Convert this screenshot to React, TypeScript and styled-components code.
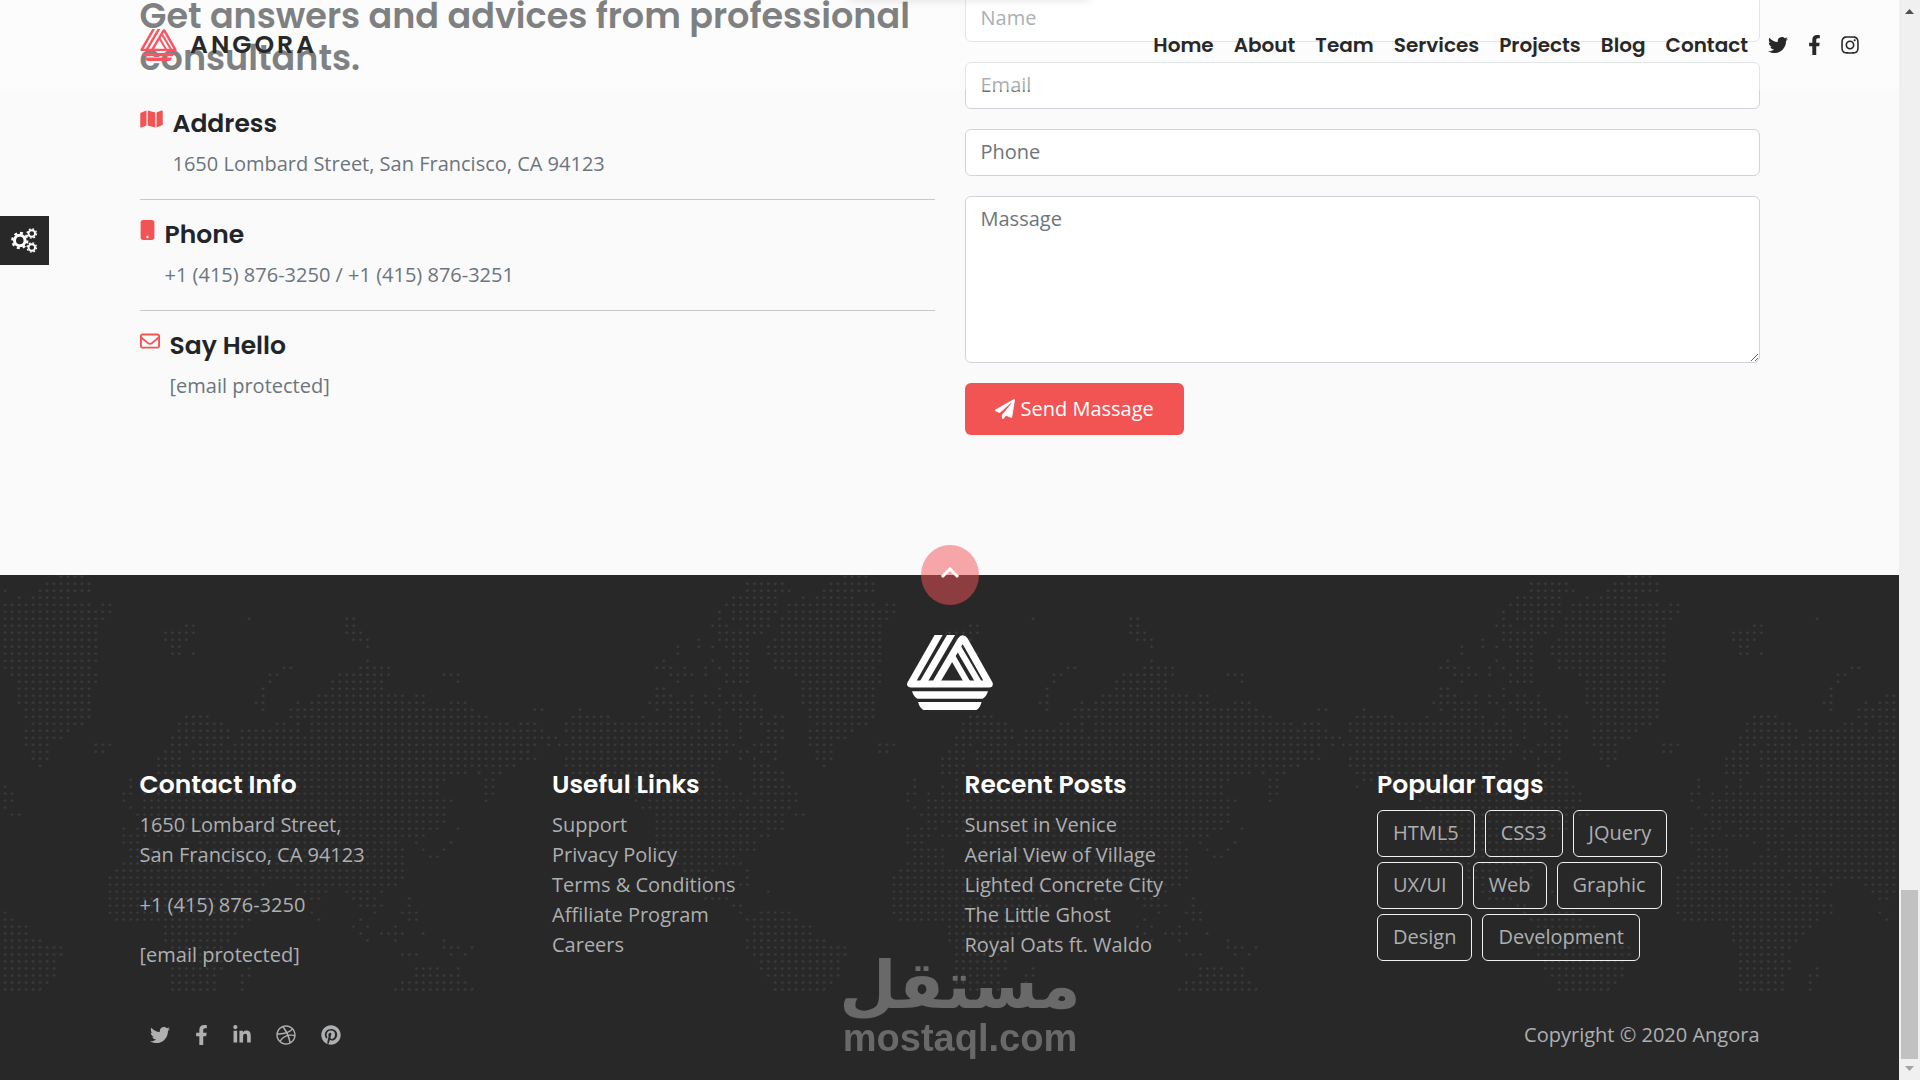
import React from "react";
import styled, { createGlobalStyle } from "styled-components";
import {
  FaDribbble,
  FaFacebookF,
  FaInstagram,
  FaLinkedinIn,
  FaPaperPlane,
  FaPinterest,
  FaTwitter,
} from "react-icons/fa";
import { FaMap, FaMobileButton, FaRegEnvelope } from "react-icons/fa6";

const red = "#f25454";
const dark = "#282828";
const ink = "#212529";
const muted = "#6c757d";
const footerText = "#adafb1";
const display = `Poppins, Inter, "Open Sans", sans-serif`;
const body = `"Open Sans", "Noto Sans", sans-serif`;

const GlobalStyle = createGlobalStyle`
  *, *::before, *::after { box-sizing: border-box; }
  html, body { height: 100%; overflow: hidden; }
  body { margin: 0; background: #fafafa; color: ${ink}; font: 400 20px/30px ${body}; }
  a { color: inherit; text-decoration: none; }
  h2, h3, p, ul { margin: 0; padding: 0; }
  ul { list-style: none; }
  button, input, textarea { font: inherit; }
`;

const Shell = styled.div`
  display: flex;
  height: 100vh;
  overflow: hidden;
`;

const Page = styled.div`
  position: relative;
  flex: 1;
  min-width: 0;
`;

const Container = styled.div`
  max-width: 1650px;
  margin: 0 auto;
  padding: 0 15px;
`;

const Icon = styled.span<{ $width: number }>`
  display: flex;
  flex: none;
  width: ${(p) => p.$width}px;
  height: 20px;
  svg { width: 100%; height: 100%; }
`;

/* ---------- header ---------- */

const Header = styled.header`
  position: absolute;
  z-index: 5;
  top: 0;
  left: 0;
  right: 0;
  height: 90px;
  display: flex;
  align-items: center;
  justify-content: space-between;
  padding: 0 40px 0 140px;
  background: rgba(255, 255, 255, 0.42);
`;

const Brand = styled.a`
  display: flex;
  align-items: center;
  gap: 13px;
  color: ${dark};
  font: 600 25px/32px ${display};
  letter-spacing: 3px;
`;

const Nav = styled.nav`
  display: flex;
  align-items: center;
  gap: 20px;
  color: ${dark};
  font: 600 20px/30px ${display};
`;

/* ---------- contact ---------- */

const Contact = styled.main`
  margin-top: -5px;
  padding-bottom: 140px;
`;

const TwoColumns = styled.div`
  display: grid;
  grid-template-columns: 1fr 1fr;
  gap: 30px;
`;

const Lead = styled.h2`
  margin-bottom: 30px;
  font: 600 35px/42px ${display};
`;

const InfoItem = styled.section`
  display: flex;
  align-items: flex-start;
  gap: 10px;
  padding-bottom: 20px;

  & + & {
    padding-top: 20px;
    border-top: 1px solid #c8c9ca;
  }

  > ${Icon} { color: ${red}; }
  h3 { margin-bottom: 10px; font: 600 25px/30px ${display}; }
  p { color: ${muted}; }
`;

const Form = styled.form`
  display: flex;
  flex-direction: column;
  align-items: flex-start;
  gap: 20px;
`;

const Field = styled.input`
  display: block;
  width: 100%;
  height: 47px;
  padding: 6px 15px 8px;
  border: 1px solid #ced4da;
  border-radius: 6px;
  background: #fff;
  color: #495057;
  &::placeholder { color: ${muted}; opacity: 1; }
`;

const MessageField = styled(Field)`
  height: 167px;
  padding: 7px 15px;
  resize: vertical;
`;

const SendButton = styled.button`
  display: flex;
  align-items: center;
  gap: 6px;
  height: 52px;
  padding: 0 30px;
  border: 0;
  border-radius: 6px;
  background: ${red};
  color: #fff;
`;

/* ---------- footer ---------- */

const Footer = styled.footer`
  position: relative;
  padding: 60px 0 30px;
  background: ${dark};
  color: ${footerText};
`;

const MapBackdrop = styled.svg`
  position: absolute;
  top: 0;
  left: 0;
  width: 100%;
  height: 420px;
`;

const FooterBody = styled(Container)`
  position: relative;
`;

const FooterLogo = styled.div`
  display: flex;
  justify-content: center;
  margin-bottom: 60px;
  color: #fff;
`;

const FooterColumns = styled.div`
  display: grid;
  grid-template-columns: repeat(4, 1fr);
  gap: 30px;
  margin-bottom: 30px;

  h3 { margin-bottom: 10px; color: #fff; font: 600 25px/30px ${display}; }
  p { margin-bottom: 20px; }
`;

const Tags = styled.ul`
  display: flex;
  flex-wrap: wrap;
  gap: 5px 10px;
  max-width: 320px;
`;

const Tag = styled.a`
  display: block;
  padding: 7px 15px 8px;
  border: 1px solid #f0f1f2;
  border-radius: 6px;
`;

const FooterBottom = styled.div`
  display: flex;
  align-items: center;
  justify-content: space-between;
`;

const Social = styled.div`
  display: flex;
  gap: 25px;
  padding-left: 10px;
`;

const ToTop = styled.a`
  position: absolute;
  z-index: 2;
  top: -30px;
  left: 50%;
  display: flex;
  align-items: center;
  justify-content: center;
  width: 58px;
  height: 60px;
  padding-bottom: 4px;
  margin-left: -29px;
  border-radius: 50%;
  background: rgba(242, 80, 86, 0.5);
`;

/* ---------- floating pieces ---------- */

const SettingsButton = styled.button`
  position: fixed;
  z-index: 6;
  top: 216px;
  left: 0;
  display: flex;
  align-items: center;
  justify-content: center;
  width: 49px;
  height: 49px;
  padding: 0;
  border: 0;
  background: ${dark};
  color: #fff;
`;

const TopShadow = styled.div`
  position: fixed;
  z-index: 7;
  top: -10px;
  left: 50%;
  width: 240px;
  height: 8px;
  margin-left: -110px;
  box-shadow: 0 2px 10px rgba(0, 0, 0, 0.12);
`;

const Watermark = styled.div`
  position: fixed;
  z-index: 8;
  left: 50%;
  bottom: 20px;
  display: flex;
  flex-direction: column;
  align-items: center;
  transform: translateX(-50%);
  color: #696969;
  pointer-events: none;
`;

const WatermarkArabic = styled.span`
  font: 700 66px/60px "DejaVu Sans", sans-serif;
`;

const WatermarkLatin = styled.span`
  font: 700 38px/44px "Liberation Sans", sans-serif;
`;

const Scrollbar = styled.div`
  display: flex;
  flex-direction: column;
  align-items: center;
  justify-content: space-between;
  width: 21px;
  height: 100vh;
  padding: 7px 0;
  background: #f0f0f0;
`;

const Track = styled.div`
  display: flex;
  flex: 1;
  flex-direction: column;
  justify-content: flex-end;
  padding-bottom: 5px;
`;

const Thumb = styled.div`
  width: 17px;
  height: 169px;
  background: #c1c1c1;
`;

/* ---------- dotted world map ---------- */

// Each row holds three neighbouring panels of the map (columns from 0, 33 and 89);
// every panel lists its runs of dots as "first-last".
const MAP_ROWS = [
  "|8-11|",
  "27-32|6-12|",
  "27-32|0,5-12|",
  "25-31|2,4-9|",
  "24-31|0-12,14-15|",
  "23,25-31|0-15|",
  "23,25-30,32|0-14,35,49-50|",
  "22-24,27-30,32|0-13,26-27,49-50|",
  "23-29,32|0-13,23-27,49-51|",
  "20,23-27,31-32|0-13,23-26,50-52|",
  "17,20,22,24-27,30-32|0-13,24-25,52|",
  "17,25-27,30-32|0-13,24-25,27|",
  "15,22,25-27,31-32|0-13,52|",
  "14-16,18,21,23,25-27,31-32|0-12,40-41,51-55|",
  "16-19,21,24,26-27|1-13,38-39,48-55|7-9",
  "17,24-27|2-13,38,47-54|9",
  "14-15,23|2-12,37,47-54|",
  "14-16,19,21,23,25-26,28|2-12,37,45-55|0-1,3-4",
  "13-19,21-22,24-28|2-12,36-37,42,44-55|0-4,8-10",
  "3,14,16-19,23,25-29|3-12,37,41-55|0-11,20-21",
  "2-7,12,16-20,23,26-29,31-32|3-12,26-29,41-55|0-13",
  "1-20,22-23,26,29-31|4-11,25-31,39-40,42,44-55|0-16,18-20",
  "1-18,20-24,26,30-32|3-9,25-32,34-42,44-55|0-21",
  "2-24,26,30-32|3-8,24-32,34-55|0-23",
  "0-25,28-31|3-6,13-15,24-26,28-31,33-55|0-20,22",
  "2-24,26-27,29-31|4-6,13-14,23-25,27-55|0-19",
  "1-23,26,28,31|4-6,22-25,27-55|0-20",
  "1-22,28-30|5,22-25,27-55|0-17",
  "2-22,28-32|22-25,28-55|0-10,12,14-15",
  "3-4,6-23,28-32|18,24,28-55|0-7,13-14",
  "2,6-24,28-32|0,18,22,24,27-55|0-6,13-14",
  "10-26,28-32|0-1,17-18,20,22-55|0-6,13-14",
  "11,13-27,29-32|0-1,17,20-55|0-8,13",
  "12-25,27-32|0,18,20-55|0-7",
  "14-24,26-32|1-2,19-55|0-7",
  "14-32|20-55|0-7",
  "14-28,30-32|17,19-21,24-30,33-55|0-6,9",
  "14-27,29-30|17-20,22-25,28-30,32-55|0-4",
  "14-28|17-19,26,28-55|0,3,8",
  "14-28|18-22,28,30-55|0-1,4,7",
  "16-25|18-22,27-29,31-55|0-1,5-6",
  "17-26|17-22,26-29,31-55|0-1",
  "18-22,27|16-34,36-55|0-1",
  "18-21,27|15-30,32-35,37-55|0-1",
  "20,26-27|15-31,33-37,42-55|0",
  "20-21,30|15-31,33-36,43-46,49-52,54|",
  "21-24|15-35,44-45,50-53|2",
  "25-26|15-37,51-54|2",
  "26,29-32|0,15-37,44,53|1-3",
  "27-32|0-1,16-35,45,51|2-3",
  "28-32|0-3,23-34,50,52|0",
  "28-32|0-3,23-33,51,54-55|0-1,4",
  "27-32|0-5,23-32,52|0,7",
  "27-32|0-8,24-31|7-9,11",
  "28-32|0-8,24-30|1-3,8,10",
  "29-32|0-7,24-31|",
  "29-32|0-7,24-31,35|3-6,9",
  "30-32|0-7,24-30,34-35|3-9",
  "31-32|0-6,24-30,34|1-10",
  "31-32|0-5,24-30,34|0-11",
];

const PANEL_START = [0, 33, 89];

const mapPath = MAP_ROWS.map((row, r) =>
  row
    .split("|")
    .map((panel, p) =>
      panel
        .split(",")
        .filter(Boolean)
        .map((run) => {
          const [from, to = from] = run.split("-").map(Number);
          let d = "";
          for (let c = from; c <= to; c++) {
            const x = 1.8 + (PANEL_START[p] + c) * 6.968;
            d += `M${x.toFixed(1)} ${(1.8 + r * 6.995).toFixed(1)}h.01`;
          }
          return d;
        })
        .join("")
    )
    .join("")
).join("");

const WorldMap = () => (
  <MapBackdrop aria-hidden="true">
    <defs>
      <pattern
        id="world"
        x="50%"
        y="0"
        width="784"
        height="420"
        patternUnits="userSpaceOnUse"
        patternTransform="translate(-392 0)"
      >
        <path d={mapPath} fill="none" stroke="#3d3d3d" strokeWidth="2.4" strokeLinecap="round" />
      </pattern>
    </defs>
    <rect width="100%" height="420" fill="url(#world)" />
  </MapBackdrop>
);

type MarkProps = { width: number; height: number; color: string; line: number };

const Mark = ({ width, height, color, line }: MarkProps) => (
  <svg width={width} height={height} viewBox="0 0 256 225" preserveAspectRatio="none" aria-hidden="true">
    <g fill="none" stroke={color} strokeWidth={line} strokeLinejoin="round">
      <path d="M97 -5L11 147H245L171 15Q166 7 161 15L85 145" />
      <path d="M134 -5L47 145" />
      <path d="M154 40L215 145M136 66L181 145" strokeWidth={line - 3} />
    </g>
    <path d="M15 169H241Q236 186 225 191H31Q20 186 15 169Z" fill={color} />
    <path d="M33 201H222Q217 220 207 225H49Q38 220 33 201Z" fill={color} />
  </svg>
);

const Gear = ({ x, y, r }: { x: number; y: number; r: number }) => {
  const teeth = r * 0.9;
  return (
    <g fill="none" stroke="currentColor">
      <circle cx={x} cy={y} r={r * 0.63} strokeWidth={r * 0.36} />
      <circle
        cx={x}
        cy={y}
        r={teeth}
        strokeWidth={r * 0.26}
        strokeDasharray={(Math.PI * teeth) / 8}
      />
    </g>
  );
};

const NAV = ["Home", "About", "Team", "Services", "Projects", "Blog", "Contact"];
const LINKS = ["Support", "Privacy Policy", "Terms & Conditions", "Affiliate Program", "Careers"];
const POSTS = [
  "Sunset in Venice",
  "Aerial View of Village",
  "Lighted Concrete City",
  "The Little Ghost",
  "Royal Oats ft. Waldo",
];
const TAGS = ["HTML5", "CSS3", "JQuery", "UX/UI", "Web", "Graphic", "Design", "Development"];

const LinkList = ({ items }: { items: string[] }) => (
  <ul>
    {items.map((item) => (
      <li key={item}>
        <a href="#">{item}</a>
      </li>
    ))}
  </ul>
);

export default function App() {
  return (
    <Shell>
      <GlobalStyle />
      <Page>
        <Header>
          <Brand href="#">
            <Mark width={37} height={32} color="#fb5460" line={17} />
            ANGORA
          </Brand>
          <Nav>
            {NAV.map((item) => (
              <a href="#" key={item}>{item}</a>
            ))}
            <a href="#" aria-label="Twitter"><Icon $width={20}><FaTwitter /></Icon></a>
            <a href="#" aria-label="Facebook"><Icon $width={13}><FaFacebookF /></Icon></a>
            <a href="#" aria-label="Instagram"><Icon $width={18}><FaInstagram /></Icon></a>
          </Nav>
        </Header>

        <Contact>
          <Container>
            <TwoColumns>
              <div>
                <Lead>Get answers and advices from professional consultants.</Lead>
                <InfoItem>
                  <Icon $width={23}><FaMap /></Icon>
                  <div>
                    <h3>Address</h3>
                    <p>1650 Lombard Street, San Francisco, CA 94123</p>
                  </div>
                </InfoItem>
                <InfoItem>
                  <Icon $width={15}><FaMobileButton /></Icon>
                  <div>
                    <h3>Phone</h3>
                    <p>+1 (415) 876-3250 / +1 (415) 876-3251</p>
                  </div>
                </InfoItem>
                <InfoItem>
                  <Icon $width={20}><FaRegEnvelope /></Icon>
                  <div>
                    <h3>Say Hello</h3>
                    <p>[email protected]</p>
                  </div>
                </InfoItem>
              </div>
              <Form onSubmit={(e: React.FormEvent) => e.preventDefault()}>
                <Field type="text" placeholder="Name" aria-label="Name" />
                <Field type="email" placeholder="Email" aria-label="Email" />
                <Field type="tel" placeholder="Phone" aria-label="Phone" />
                <MessageField as="textarea" placeholder="Massage" aria-label="Massage" />
                <SendButton type="submit">
                  <Icon $width={20}><FaPaperPlane /></Icon>
                  Send Massage
                </SendButton>
              </Form>
            </TwoColumns>
          </Container>
        </Contact>

        <Footer>
          <WorldMap />
          <ToTop href="#" aria-label="Back to top">
            <svg width="20" height="12" viewBox="0 0 20 12" aria-hidden="true">
              <path d="M2 10L10 2L18 10" fill="none" stroke="#fff" strokeWidth="3" />
            </svg>
          </ToTop>
          <FooterBody>
            <FooterLogo>
              <Mark width={86} height={75} color="#fff" line={21} />
            </FooterLogo>
            <FooterColumns>
              <section>
                <h3>Contact Info</h3>
                <p>
                  1650 Lombard Street,
                  <br />
                  San Francisco, CA 94123
                </p>
                <p>+1 (415) 876-3250</p>
                <p>[email protected]</p>
              </section>
              <section>
                <h3>Useful Links</h3>
                <LinkList items={LINKS} />
              </section>
              <section>
                <h3>Recent Posts</h3>
                <LinkList items={POSTS} />
              </section>
              <section>
                <h3>Popular Tags</h3>
                <Tags>
                  {TAGS.map((tag) => (
                    <li key={tag}>
                      <Tag href="#">{tag}</Tag>
                    </li>
                  ))}
                </Tags>
              </section>
            </FooterColumns>
            <FooterBottom>
              <Social>
                <a href="#" aria-label="Twitter"><Icon $width={20}><FaTwitter /></Icon></a>
                <a href="#" aria-label="Facebook"><Icon $width={13}><FaFacebookF /></Icon></a>
                <a href="#" aria-label="LinkedIn"><Icon $width={18}><FaLinkedinIn /></Icon></a>
                <a href="#" aria-label="Dribbble"><Icon $width={20}><FaDribbble /></Icon></a>
                <a href="#" aria-label="Pinterest"><Icon $width={20}><FaPinterest /></Icon></a>
              </Social>
              <span>Copyright © 2020 Angora</span>
            </FooterBottom>
          </FooterBody>
        </Footer>
      </Page>

      <Scrollbar aria-hidden="true">
        <svg width="9" height="9" viewBox="0 0 9 9"><path d="M4.500 2L9 7H0Z" fill="#505050" /></svg>
        <Track>
          <Thumb />
        </Track>
        <svg width="9" height="9" viewBox="0 0 9 9"><path d="M4.500 7L0 2H9Z" fill="#a3a3a3" /></svg>
      </Scrollbar>

      <SettingsButton type="button" aria-label="Settings">
        <svg width="27" height="25" viewBox="0 0 27 25" aria-hidden="true">
          <Gear x={8.8} y={12.500} r={8.4} />
          <Gear x={20.8} y={5.500} r={5.2} />
          <Gear x={20.8} y={19.500} r={5.2} />
        </svg>
      </SettingsButton>
      <TopShadow />
      <Watermark>
        <WatermarkArabic lang="ar" dir="rtl">مستقل</WatermarkArabic>
        <WatermarkLatin>mostaql.com</WatermarkLatin>
      </Watermark>
    </Shell>
  );
}
